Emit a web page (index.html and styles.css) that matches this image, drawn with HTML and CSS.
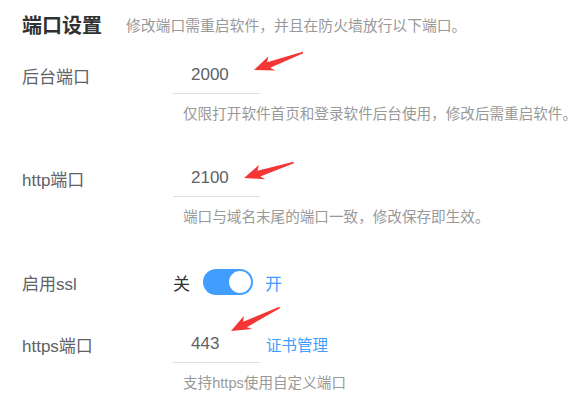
FILE: index.html
```html
<!DOCTYPE html>
<html lang="zh-CN">
  <head>
    <meta charset="UTF-8" />
    <title>端口设置</title>
    <link rel="stylesheet" href="styles.css">
  </head>
  <body>
    <div class="page">
      <div class="header">
        <h2 class="title">端口设置</h2>
        <span class="subtitle">修改端口需重启软件，并且在防火墙放行以下端口。</span>
      </div>

      <div class="item item-first">
        <div class="row">
          <label class="label">后台端口</label>
          <input class="port" type="text" value="2000">
        </div>
        <p class="hint">仅限打开软件首页和登录软件后台使用，修改后需重启软件。</p>
      </div>

      <div class="item">
        <div class="row">
          <label class="label">http端口</label>
          <input class="port" type="text" value="2100">
        </div>
        <p class="hint">端口与域名末尾的端口一致，修改保存即生效。</p>
      </div>

      <div class="item item-switch">
        <div class="row">
          <label class="label">启用ssl</label>
          <span class="switch-text">关</span>
          <span class="switch is-on"><span class="knob"></span></span>
          <span class="switch-text active">开</span>
        </div>
      </div>

      <div class="item">
        <div class="row">
          <label class="label">https端口</label>
          <input class="port" type="text" value="443">
          <a class="link" href="#">证书管理</a>
        </div>
        <p class="hint">支持https使用自定义端口</p>
      </div>

      <!-- annotation arrows drawn on top of the form -->
      <svg class="arrows" width="584" height="412" viewBox="0 0 584 412">
        <polygon transform="translate(254 70) rotate(-19.5)" points="0,0 18,-8 15,-3 52,-1 52,0.6 16,3.4 20,7.5" />
        <polygon transform="translate(244 178) rotate(-17)" points="0,0 18,-8 15,-3 52,-1 52,0.6 16,3.4 20,7.5" />
        <polygon transform="translate(231 331) rotate(-25.6)" points="0,0 18,-8 15,-3 54,-1 54,0.6 16,3.4 20,7.5" />
      </svg>
    </div>
  </body>
</html>
```

FILE: styles.css
```css
* {
  box-sizing: border-box;
}

body {
  margin: 0;
  background-color: #ffffff;
  font-family: "Liberation Sans", Arial, "Noto Sans CJK SC", sans-serif;
  color: #606266;
}

.page {
  position: relative;
  width: 584px;
  height: 412px;
  padding: 9px 0 0 22px;
  overflow: hidden;
}

.header {
  display: flex;
  align-items: center;
  height: 30px;
  white-space: nowrap;
}

.title {
  margin: 0;
  font-size: 20px;
  font-weight: bold;
  color: #303133;
}

.subtitle {
  margin-left: 24px;
  font-size: 14.8px;
  color: #999999;
}

.item {
  margin-top: 35px;
}

.item-first {
  margin-top: 17px;
}

.item-switch {
  margin-top: 36px;
}

.item-switch + .item {
  margin-top: 24px;
}

.row {
  display: flex;
  align-items: center;
  height: 38px;
}

.label {
  width: 151px;
  font-size: 17px;
  color: #606266;
}

.port {
  width: 87px;
  height: 38px;
  padding: 0 0 0 18px;
  border: none;
  border-bottom: 1px solid #dcdfe6;
  outline: none;
  font-family: inherit;
  font-size: 17px;
  color: #606266;
  background: transparent;
}

.hint {
  margin: 10px 0 0 161px;
  font-size: 14.6px;
  line-height: 20px;
  color: #999999;
  white-space: nowrap;
}

.switch-text {
  font-size: 17px;
  color: #303133;
}

.switch-text.active {
  margin-left: 12px;
  color: #409eff;
}

.switch {
  display: flex;
  align-items: center;
  justify-content: flex-end;
  width: 50px;
  height: 26px;
  margin-left: 13px;
  padding: 0 2px;
  border-radius: 13px;
  background-color: #409eff;
}

.knob {
  width: 22px;
  height: 22px;
  border-radius: 50%;
  background-color: #ffffff;
}

.link {
  margin-left: 6px;
  font-size: 15.5px;
  color: #409eff;
  text-decoration: none;
}

.arrows {
  position: absolute;
  top: 0;
  left: 0;
  fill: #f53636;
  pointer-events: none;
}
```
